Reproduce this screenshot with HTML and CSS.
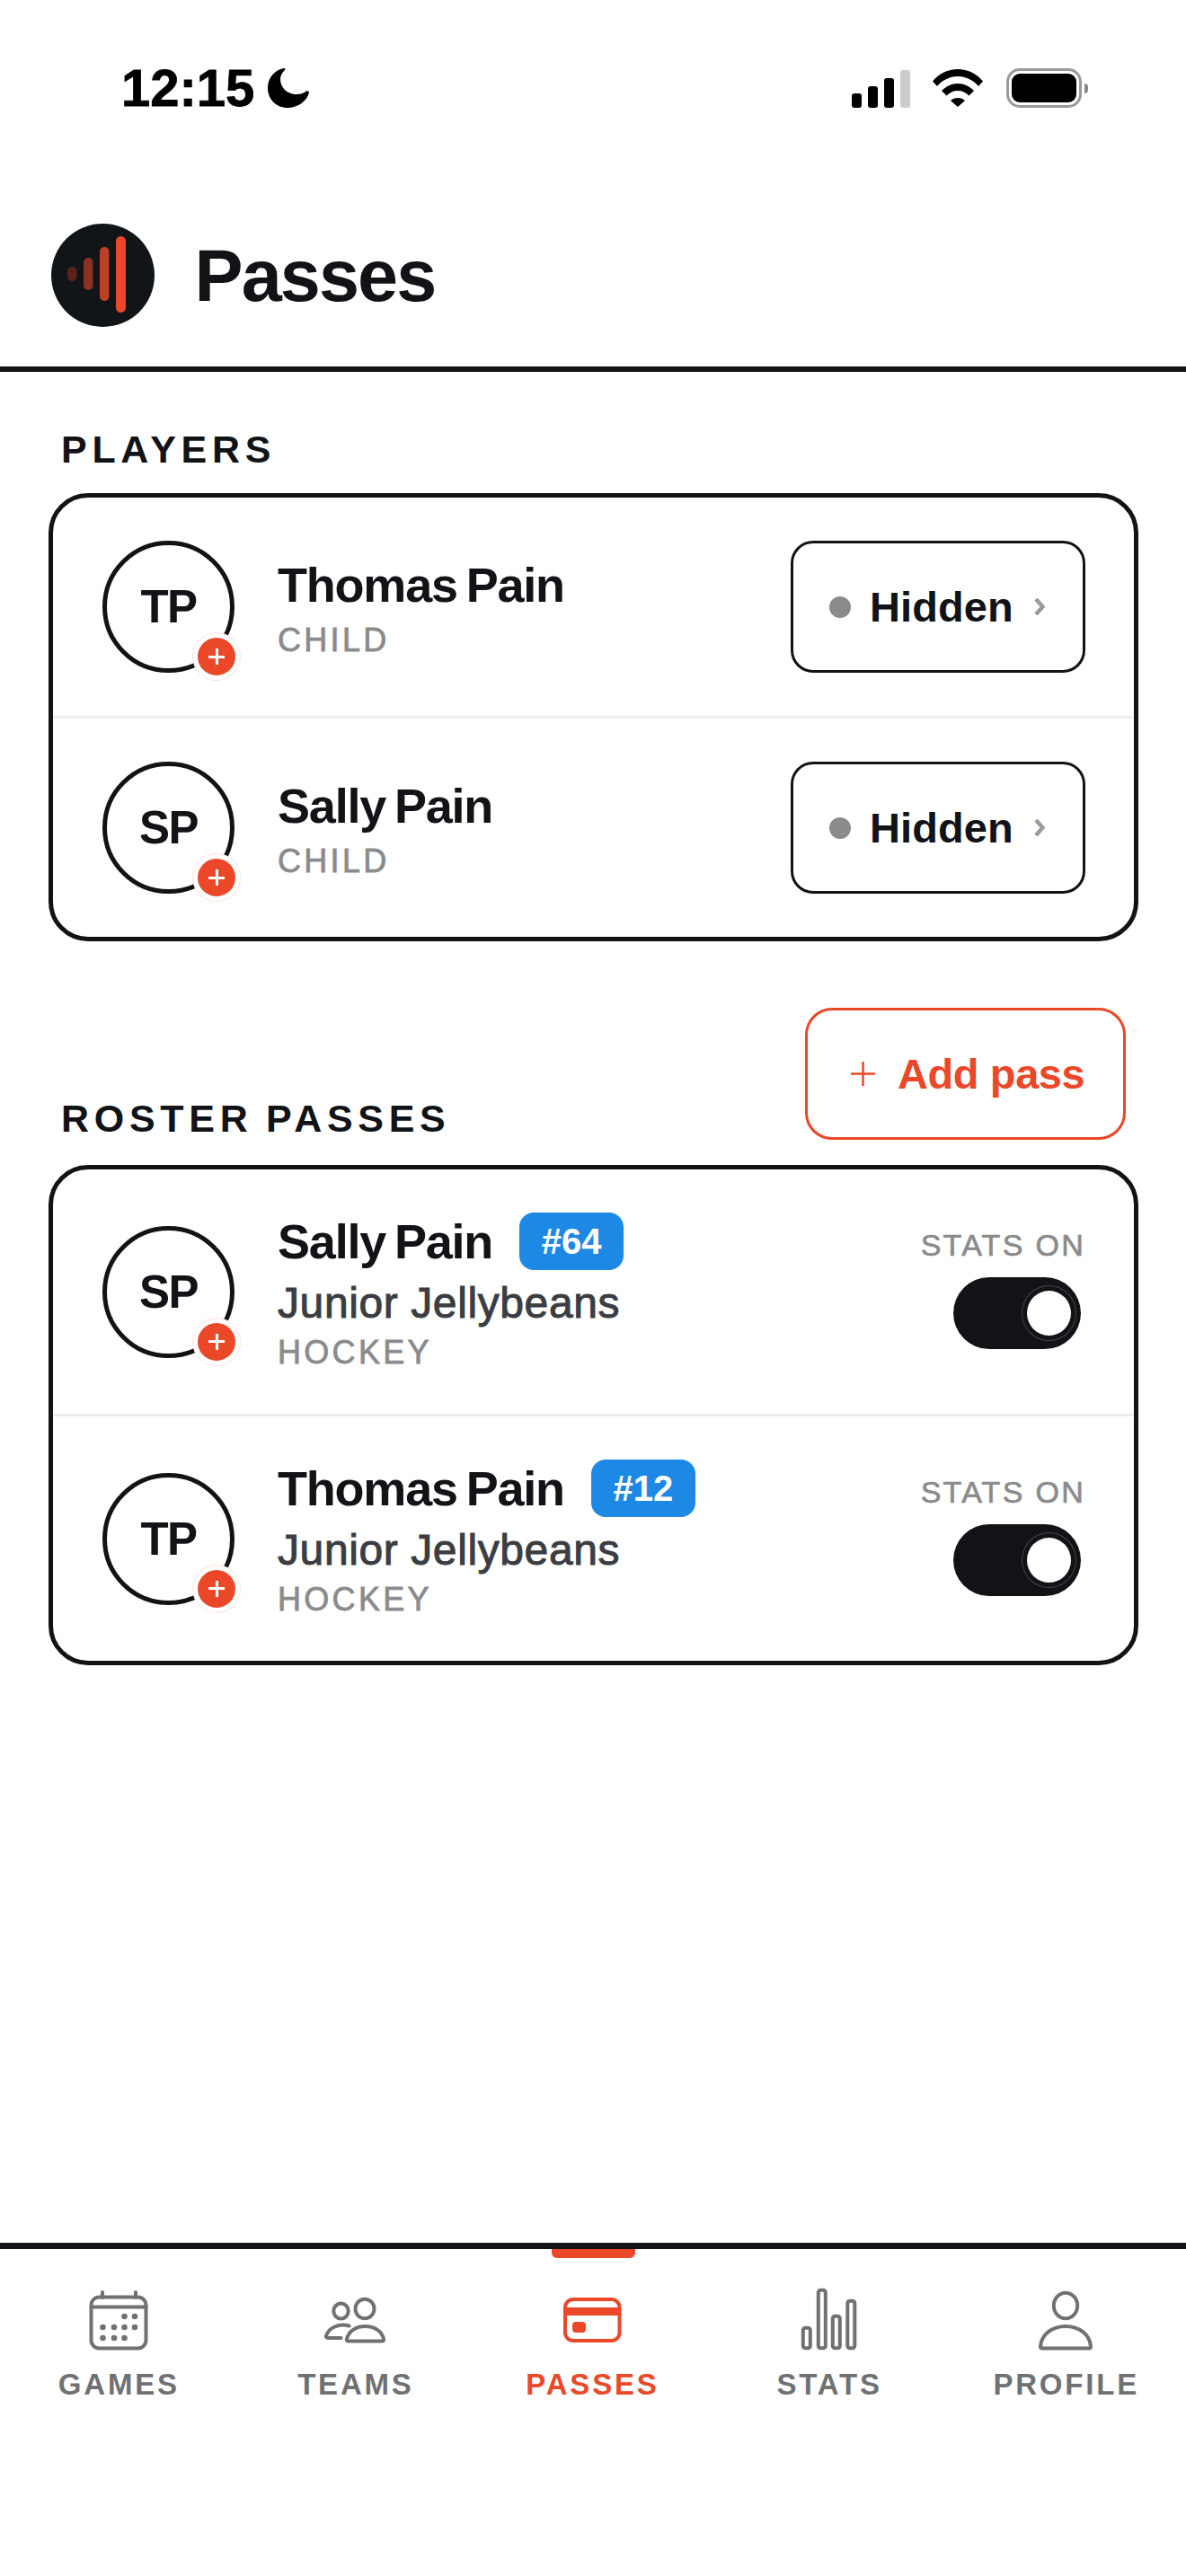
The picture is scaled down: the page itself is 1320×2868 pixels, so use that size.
FILE: index.html
```html
<!DOCTYPE html>
<html lang="en">
<head>
  <meta charset="UTF-8">
  <meta name="viewport" content="width=device-width, initial-scale=1.0">
  <title>Passes</title>
  <link rel="stylesheet" href="styles.css">
</head>
<body>
  <!-- status bar -->
  <div class="status-bar">
    <div class="status-left">
      <span class="time">12:15</span>
      <svg class="moon" width="46" height="46" viewBox="0 0 46 46"><path d="M18 1C7 3 0 12 0 23c0 13 10 22 22 22 12 0 22-8 24-17 0-2-2-2-3-1.500C40 29 36 30 32 30 21 30 14 22 14 13c0-4 2-7 5-10 1-2 0-2-1-2z"/></svg>
    </div>
    <div class="status-right">
      <div class="signal">
        <span class="signal-bar bar-1"></span>
        <span class="signal-bar bar-2"></span>
        <span class="signal-bar bar-3"></span>
        <span class="signal-bar bar-4"></span>
      </div>
      <svg class="wifi" width="56" height="42" viewBox="0 0 56 42"><path d="M0 13.500C7 5 17 0 28 0s21 5 28 13.500l-5 5.500C45 12 37 8 28 8s-17 4-23 11z"/><path d="M10 24c5-5 11-8 18-8s13 3 18 8l-5.500 5.500C37 26 33 24 28 24s-9 2-12.500 5.500z"/><path d="M20 35c2-2 5-3 8-3s6 1 8 3l-8 7z"/></svg>
      <div class="battery">
        <div class="battery-body"><span class="battery-fill"></span></div>
        <span class="battery-cap"></span>
      </div>
    </div>
  </div>

  <header class="page-header">
    <svg class="logo" width="115" height="115" viewBox="0 0 115 115">
      <circle cx="57.500" cy="57.500" r="57.500" fill="#111518"/>
      <rect x="18" y="48" width="10.500" height="16" rx="5" fill="#5b2218"/>
      <rect x="36" y="38" width="10.500" height="36" rx="5" fill="#8b3022"/>
      <rect x="54" y="26" width="10.500" height="60" rx="5" fill="#bd3f26"/>
      <rect x="72" y="14" width="11" height="85" rx="5.500" fill="#ea4828"/>
    </svg>
    <h1 class="page-title">Passes</h1>
  </header>

  <main class="content">
    <div class="section-head">
      <h2 class="section-title">PLAYERS</h2>
    </div>
    <section class="card">
      <div class="row">
        <div class="avatar">TP<span class="avatar-plus"></span></div>
        <div class="info">
          <div class="name">Thomas Pain</div>
          <div class="meta">CHILD</div>
        </div>
        <button class="visibility" type="button">
          <span class="visibility-dot"></span>
          <span class="visibility-text">Hidden</span>
          <svg class="chevron" width="12" height="19" viewBox="0 0 12 19"><path d="M2 1l7.500 8.500L2 18"/></svg>
        </button>
      </div>
      <div class="row">
        <div class="avatar">SP<span class="avatar-plus"></span></div>
        <div class="info">
          <div class="name">Sally Pain</div>
          <div class="meta">CHILD</div>
        </div>
        <button class="visibility" type="button">
          <span class="visibility-dot"></span>
          <span class="visibility-text">Hidden</span>
          <svg class="chevron" width="12" height="19" viewBox="0 0 12 19"><path d="M2 1l7.500 8.500L2 18"/></svg>
        </button>
      </div>
    </section>

    <div class="section-head section-head-roster">
      <h2 class="section-title">ROSTER PASSES</h2>
      <button class="add-pass" type="button">
        <svg class="add-icon" width="27" height="27" viewBox="0 0 27 27"><path d="M13.500 0v27M0 13.500h27"/></svg>
        <span>Add pass</span>
      </button>
    </div>
    <section class="card">
      <div class="row">
        <div class="avatar">SP<span class="avatar-plus"></span></div>
        <div class="info">
          <div class="name-line">
            <span class="name">Sally Pain</span>
            <span class="jersey">#64</span>
          </div>
          <div class="team">Junior Jellybeans</div>
          <div class="meta">HOCKEY</div>
        </div>
        <div class="stats">
          <span class="stats-label">STATS ON</span>
          <span class="toggle"><span class="toggle-knob"></span></span>
        </div>
      </div>
      <div class="row">
        <div class="avatar">TP<span class="avatar-plus"></span></div>
        <div class="info">
          <div class="name-line">
            <span class="name">Thomas Pain</span>
            <span class="jersey">#12</span>
          </div>
          <div class="team">Junior Jellybeans</div>
          <div class="meta">HOCKEY</div>
        </div>
        <div class="stats">
          <span class="stats-label">STATS ON</span>
          <span class="toggle"><span class="toggle-knob"></span></span>
        </div>
      </div>
    </section>
  </main>

  <!-- bottom tabs -->
  <nav class="tabs">
    <a class="tab">
      <svg class="tab-icon" width="72" height="72" viewBox="0 0 72 72">
        <rect x="5.500" y="10.500" width="61" height="57" rx="9"/>
        <path d="M5.500 21.500h61M18 5v6M55 5v6"/>
        <g class="dots">
          <circle cx="42.500" cy="32" r="3.300"/><circle cx="54" cy="32" r="3.300"/>
          <circle cx="18.500" cy="44" r="3.300"/><circle cx="31" cy="44" r="3.300"/><circle cx="42.500" cy="44" r="3.300"/><circle cx="54" cy="44" r="3.300"/>
          <circle cx="18.500" cy="56" r="3.300"/><circle cx="31" cy="56" r="3.300"/><circle cx="42.500" cy="56" r="3.300"/>
        </g>
      </svg>
      <span class="tab-label">GAMES</span>
    </a>
    <a class="tab">
      <svg class="tab-icon" width="72" height="72" viewBox="0 0 72 72">
        <ellipse cx="47" cy="23.500" rx="10.500" ry="10.800"/>
        <path d="M28.500 59.500c-1.500 0-2-1-1.500-2.500 2-8.500 10-14 20.500-14S66 48.500 68 57c.5 1.500 0 2.500-1.500 2.500z"/>
        <ellipse cx="20.500" cy="26" rx="8.200" ry="8.500"/>
        <path d="M29.500 42.500C18 39.500 7 44.500 4 53.500c-.5 1.500.5 2.500 2 2.500h14.500"/>
      </svg>
      <span class="tab-label">TEAMS</span>
    </a>
    <a class="tab tab-active">
      <svg class="tab-icon" width="72" height="72" viewBox="0 0 72 72">
        <rect x="6" y="13" width="60.500" height="46" rx="9"/>
        <rect class="solid" x="6" y="22" width="60.500" height="9"/>
        <rect class="solid" x="14" y="38" width="15" height="12" rx="4"/>
      </svg>
      <span class="tab-label">PASSES</span>
    </a>
    <a class="tab">
      <svg class="tab-icon" width="72" height="72" viewBox="0 0 72 72">
        <rect x="6.800" y="44.800" width="8" height="22.500" rx="2.500"/>
        <rect x="23.800" y="2.800" width="8" height="64.500" rx="2.500"/>
        <rect x="39.800" y="31.800" width="8" height="35.500" rx="2.500"/>
        <rect x="56.300" y="14.800" width="8" height="52.500" rx="2.500"/>
      </svg>
      <span class="tab-label">STATS</span>
    </a>
    <a class="tab">
      <svg class="tab-icon" width="72" height="72" viewBox="0 0 72 72">
        <ellipse cx="36" cy="20" rx="13.200" ry="14.300"/>
        <path d="M8 65.500C9 52 21 43 36 43s27 9 28 22.500c0 1.500-.8 2-2 2H10c-1.200 0-2-.5-2-2z"/>
      </svg>
      <span class="tab-label">PROFILE</span>
    </a>
  </nav>
</body>
</html>
```

FILE: styles.css
```css
* {
  box-sizing: border-box;
}

body {
  margin: 0;
  min-height: 100vh;
  display: flex;
  flex-direction: column;
  background-color: #fff;
  color: #111317;
  font-family: "Liberation Sans", Arial, sans-serif;
}

/* status bar */
.status-bar {
  display: flex;
  justify-content: space-between;
  align-items: center;
  height: 44px;
  margin-top: 76px;
  padding: 0 109px 0 135px;
  color: #000;
}

.status-left {
  display: flex;
  align-items: center;
  gap: 15px;
}

.time {
  font-size: 58px;
  font-weight: bold;
  line-height: 44px;
  -webkit-text-stroke: 0.8px #000;
}

.moon {
  display: block;
}

.status-right {
  display: flex;
  align-items: center;
  gap: 25px;
}

.signal {
  display: flex;
  align-items: flex-end;
  gap: 6.500px;
  height: 42px;
  margin-top: 2px;
}

.signal-bar {
  width: 11.500px;
  border-radius: 3px;
  background-color: #000;
}

.bar-1 { height: 16px; }
.bar-2 { height: 24px; }
.bar-3 { height: 33px; }
.bar-4 { height: 42px; background-color: #ccc; }

.wifi {
  display: block;
  margin-right: 1px;
}

.battery {
  display: flex;
  align-items: center;
  gap: 3px;
}

.battery-body {
  width: 84px;
  height: 44px;
  padding: 3px;
  border: 3.500px solid #999;
  border-radius: 15px;
}

.battery-fill {
  display: block;
  height: 100%;
  border-radius: 9px;
  background-color: #000;
}

.battery-cap {
  width: 4px;
  height: 11px;
  border-radius: 0 4px 4px 0;
  background-color: #888;
}

/* page header */
.page-header {
  display: flex;
  align-items: center;
  gap: 44.500px;
  margin-top: 129px;
  padding: 0 0 44px 57px;
  border-bottom: 6px solid #111317;
}

.logo {
  display: block;
}

.page-title {
  margin: 0;
  font-size: 81px;
  line-height: 90px;
  font-weight: bold;
  letter-spacing: -1.900px;
}

/* main */
.content {
  padding: 0 53.500px;
}

.section-head {
  display: flex;
  justify-content: space-between;
  align-items: flex-end;
  padding: 0 13.500px 0 14.500px;
  margin-top: 62px;
  margin-bottom: 25px;
}

.section-head-roster {
  margin-top: 74px;
  margin-bottom: 28px;
}

.section-title {
  margin: 0;
  font-size: 43px;
  line-height: 48px;
  font-weight: bold;
  letter-spacing: 5.700px;
  word-spacing: -3px;
}

.card {
  border: 5px solid #111317;
  border-radius: 44px;
  overflow: hidden;
}

.row {
  display: flex;
  align-items: center;
  padding: 48px 53.500px 48px 55.500px;
}

.row + .row {
  border-top: 3px solid #eee;
}

.avatar {
  position: relative;
  flex: none;
  display: flex;
  align-items: center;
  justify-content: center;
  width: 147px;
  height: 147px;
  border: 5px solid #111317;
  border-radius: 50%;
  font-size: 51px;
  font-weight: bold;
  letter-spacing: -1.500px;
}

.avatar-plus {
  position: absolute;
  right: -11px;
  bottom: -13px;
  width: 52px;
  height: 52px;
  border: 5px solid #fff;
  border-radius: 50%;
  background:
    linear-gradient(#fff, #fff) center / 18px 3px no-repeat,
    linear-gradient(#fff, #fff) center / 3px 18px no-repeat,
    #ea4828;
  box-shadow: 0 0 0 1px #fde3dc;
}

.info {
  flex: 1;
  margin-left: 48px;
}

.name {
  display: block;
  font-size: 54px;
  line-height: 60px;
  font-weight: bold;
  letter-spacing: -1.200px;
  word-spacing: -4px;
}

.meta {
  margin-top: 10px;
  color: #8a8b8d;
  font-size: 36px;
  line-height: 40px;
  letter-spacing: 3.300px;
  -webkit-text-stroke: 0.8px #8a8b8d;
}

.name + .meta {
  margin-top: 12px;
  margin-bottom: -2px;
}

.name-line {
  display: flex;
  align-items: center;
  gap: 30px;
  height: 64px;
}

.jersey {
  display: block;
  padding: 0 24.500px;
  border-radius: 16px;
  background-color: #1e88e5;
  color: #fff;
  font-size: 40px;
  line-height: 64px;
  font-weight: bold;
}

.team {
  margin-top: 10px;
  margin-bottom: -2px;
  color: #3c3d42;
  font-size: 48px;
  line-height: 54px;
  letter-spacing: 0.600px;
  -webkit-text-stroke: 1px #3c3d42;
}

/* hidden button */
.visibility {
  flex: none;
  display: flex;
  align-items: center;
  width: 328px;
  height: 147px;
  padding: 0 0 0 40px;
  border: 3.500px solid #111317;
  border-radius: 25px;
  background-color: #fff;
  color: #111317;
  font-family: inherit;
}

.visibility-dot {
  width: 24px;
  height: 24px;
  border-radius: 50%;
  background-color: #8a8b8d;
}

.visibility-text {
  margin: 0 23px 0 21px;
  font-size: 47px;
  font-weight: bold;
  letter-spacing: 0.100px;
}

.chevron {
  display: block;
  fill: none;
  stroke: #9a9a9a;
  stroke-width: 4.500;
}

/* add pass */
.add-pass {
  display: flex;
  align-items: center;
  gap: 25px;
  width: 357px;
  height: 147px;
  padding: 0 0 0 48px;
  border: 3.500px solid #ea4828;
  border-radius: 30px;
  background-color: #fff;
  color: #ea4828;
  font-family: inherit;
  font-size: 47px;
  font-weight: bold;
  letter-spacing: -0.400px;
}

.add-icon {
  display: block;
  flex: none;
  stroke: #ea4828;
  stroke-width: 2.500;
}

/* stats toggle */
.stats {
  display: flex;
  flex-direction: column;
  align-items: flex-end;
  gap: 17px;
  padding-bottom: 7px;
}

.stats-label {
  color: #8a8b8d;
  font-size: 34px;
  line-height: 38px;
  letter-spacing: 2.300px;
  -webkit-text-stroke: 0.7px #8a8b8d;
}

.toggle {
  display: flex;
  align-items: center;
  justify-content: flex-end;
  width: 142px;
  height: 80px;
  margin-right: 5px;
  padding-right: 11px;
  border-radius: 40px;
  background-color: #111317;
}

.toggle-knob {
  width: 49px;
  height: 50px;
  border-radius: 50%;
  background-color: #fff;
  box-shadow: 0 0 0 5px #111317, 0 0 0 6px #45474b;
}

/* tabs */
.tabs {
  position: relative;
  display: grid;
  grid-template-columns: repeat(5, 1fr);
  margin-top: auto;
  height: 371px;
  padding: 43px 2px 0 0;
  border-top: 7px solid #111317;
}

.tab {
  position: relative;
  display: flex;
  flex-direction: column;
  align-items: center;
  height: 130px;
  color: #707173;
  fill: none;
  stroke: #707173;
}

.tab-active {
  color: #ea4828;
  stroke: #ea4828;
}

.tab-active::before {
  content: "";
  position: absolute;
  top: -43px;
  left: 50%;
  width: 93px;
  height: 10px;
  margin-left: -45px;
  border-radius: 0 0 6px 6px;
  background-color: #ea4828;
}

.tab-icon {
  display: block;
  stroke-width: 4;
  stroke-linecap: round;
  stroke-linejoin: round;
}

.dots {
  fill: #707173;
  stroke: none;
}

.solid {
  fill: #ea4828;
  stroke: none;
}

.tab-label {
  margin-top: 17px;
  padding-left: 1px;
  font-size: 33px;
  line-height: 38px;
  font-weight: bold;
  letter-spacing: 2.800px;
}
```
